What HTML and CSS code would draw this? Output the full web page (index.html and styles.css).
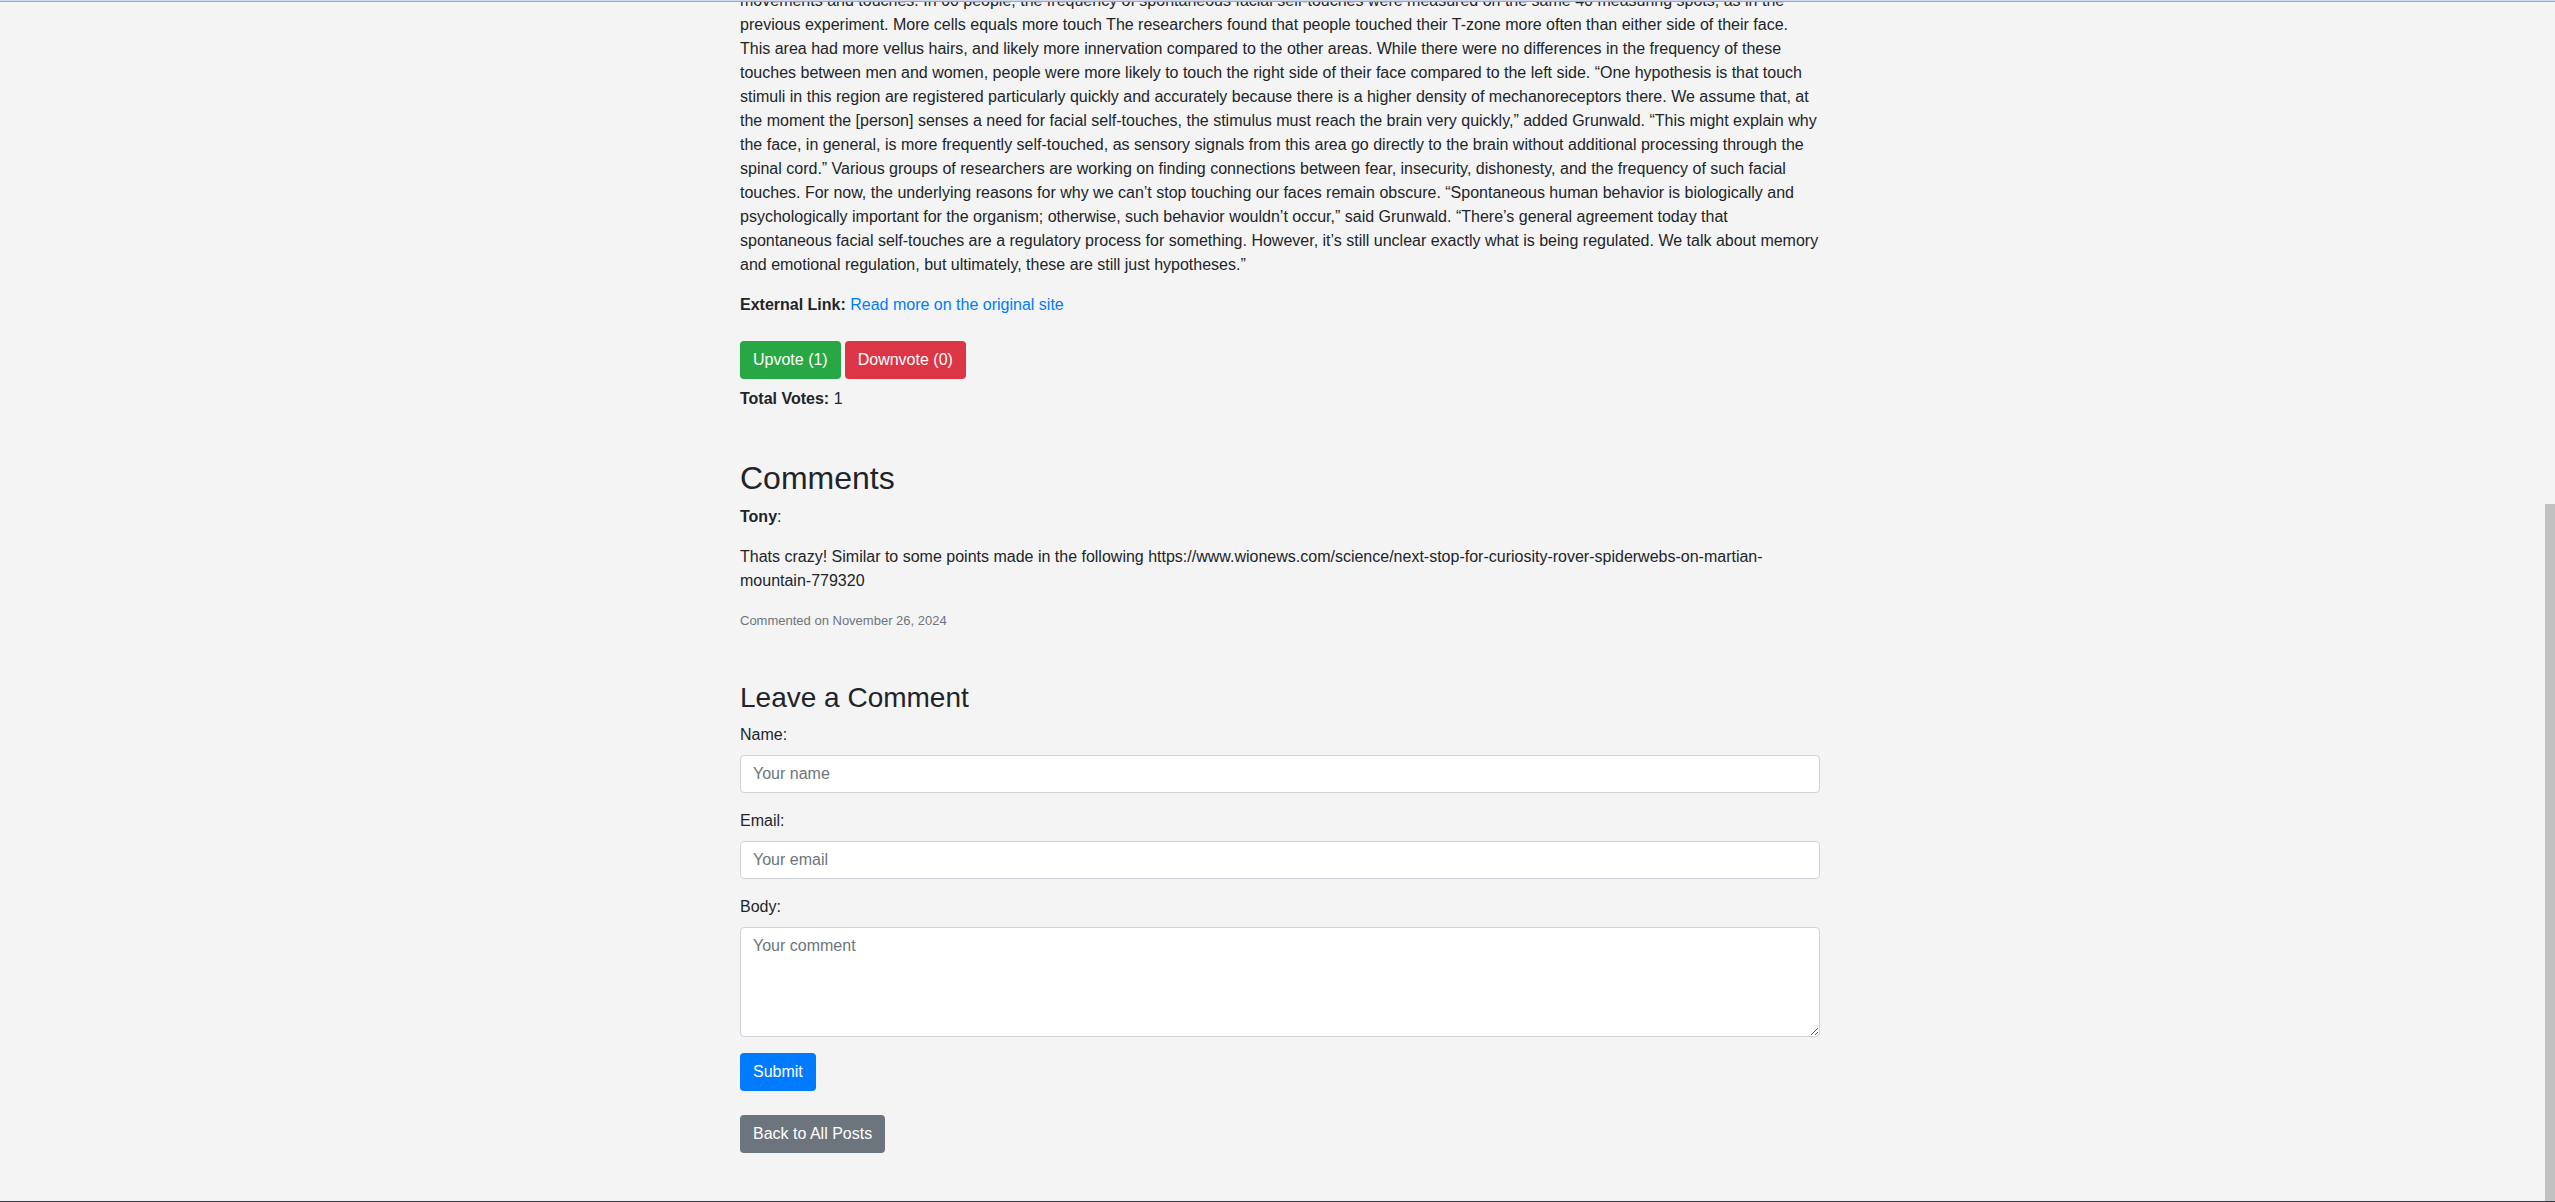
FILE: index.html
```html
<!DOCTYPE html>
<html lang="en">
<head>
<meta charset="utf-8">
<meta name="viewport" content="width=device-width, initial-scale=1">
<title>Post</title>
<link rel="stylesheet" href="styles.css">
</head>
<body>
<div class="window">
  <main class="page">
    <div class="container">
      <p>movements and touches. In 60 people, the frequency of spontaneous facial self-touches were measured on the same 40 measuring spots, as in the previous experiment. More cells equals more touch The researchers found that people touched their T-zone more often than either side of their face. This area had more vellus hairs, and likely more innervation compared to the other areas. While there were no differences in the frequency of these touches between men and women, people were more likely to touch the right side of their face compared to the left side. “One hypothesis is that touch stimuli in this region are registered particularly quickly and accurately because there is a higher density of mechanoreceptors there. We assume that, at the moment the [person] senses a need for facial self-touches, the stimulus must reach the brain very quickly,” added Grunwald. “This might explain why the face, in general, is more frequently self-touched, as sensory signals from this area go directly to the brain without additional processing through the spinal cord.” Various groups of researchers are working on finding connections between fear, insecurity, dishonesty, and the frequency of such facial touches. For now, the underlying reasons for why we can’t stop touching our faces remain obscure. “Spontaneous human behavior is biologically and psychologically important for the organism; otherwise, such behavior wouldn’t occur,” said Grunwald. “There’s general agreement today that spontaneous facial self-touches are a regulatory process for something. However, it’s still unclear exactly what is being regulated. We talk about memory and emotional regulation, but ultimately, these are still just hypotheses.”</p>
      <p class="external"><strong>External Link:</strong> <a href="#original">Read more on the original site</a></p>

      <section class="votes">
        <div class="vote-buttons">
          <button type="button" class="btn btn-success">Upvote (1)</button>
          <button type="button" class="btn btn-danger">Downvote (0)</button>
        </div>
        <p class="total"><strong>Total Votes:</strong> 1</p>
      </section>

      <section class="comments">
        <h2>Comments</h2>
        <article>
          <p><strong>Tony</strong>:</p>
          <p>Thats crazy! Similar to some points made in the following https://www.wionews.com/science/next-stop-for-curiosity-rover-spiderwebs-on-martian-mountain-779320</p>
          <p class="date">Commented on November 26, 2024</p>
        </article>
      </section>

      <section>
        <h3>Leave a Comment</h3>
        <form>
          <div class="form-group">
            <label for="name">Name:</label>
            <input class="form-control" type="text" id="name" name="name" placeholder="Your name">
          </div>
          <div class="form-group">
            <label for="email">Email:</label>
            <input class="form-control" type="email" id="email" name="email" placeholder="Your email">
          </div>
          <div class="form-group">
            <label for="body">Body:</label>
            <textarea class="form-control" id="body" name="body" rows="4" placeholder="Your comment"></textarea>
          </div>
          <button type="submit" class="btn btn-primary">Submit</button>
        </form>
      </section>

      <a class="btn btn-secondary back" href="#posts">Back to All Posts</a>
    </div>
  </main>
  <div class="scrollbar" aria-hidden="true"><div class="thumb"></div></div>
</div>
</body>
</html>
```
FILE: styles.css
```css
*,
*::before,
*::after {
  box-sizing: border-box;
}

body {
  margin: 0;
  background: #f4f4f4;
  color: #212529;
  font-family: Arial, "Liberation Sans", sans-serif;
  font-size: 16px;
  line-height: 24px;
}

/* The window shows the end of a long, scrolled post */
.window {
  display: grid;
  grid-template-columns: minmax(0, 1fr) 10px;
  height: 100vh;
  border-bottom: 1px solid #39393f;
  overflow: hidden;
}

.window::before {
  content: "";
  position: absolute;
  inset: 0 0 auto;
  height: 2px;
  background: #d0d9f0;
  border-bottom: 1px solid #98a9cd;
}

.page {
  display: flex;
  flex-direction: column;
  justify-content: flex-end;
  min-height: 0;
  padding: 0 0 48px 15px;
}

.container {
  width: 100%;
  max-width: 1080px;
  margin: 0 auto;
}

p {
  margin: 0 0 16px;
}

a {
  color: #007bff;
  text-decoration: none;
}

h2,
h3 {
  margin: 0 0 8px;
  font-weight: 500;
}

h2 {
  font-size: 32px;
  line-height: 38px;
}

h3 {
  font-size: 28px;
  line-height: 34px;
}

.external {
  margin-bottom: 24px;
}

.vote-buttons {
  display: flex;
  gap: 4px;
}

.votes,
.comments {
  margin-bottom: 48px;
}

.total {
  margin: 8px 0 0;
}

.date {
  margin: 0;
  color: #6c757d;
  font-size: 13px;
}

.btn {
  display: inline-block;
  padding: 6px 12px;
  border: 1px solid transparent;
  border-radius: 4px;
  color: #fff;
  font: inherit;
  text-align: center;
  vertical-align: middle;
  cursor: pointer;
}

.btn-success {
  background: #28a745;
}

.btn-danger {
  background: #dc3545;
}

.btn-primary {
  display: block;
  background: #007bff;
}

.btn-secondary {
  background: #6c757d;
}

.back {
  display: block;
  width: fit-content;
  margin-top: 24px;
}

.form-group {
  margin-bottom: 16px;
}

label {
  display: block;
  margin-bottom: 8px;
}

.form-control {
  display: block;
  width: 100%;
  height: 38px;
  padding: 6px 12px;
  border: 1px solid #ced4da;
  border-radius: 4px;
  background: #fff;
  color: #495057;
  font: inherit;
}

textarea.form-control {
  height: auto;
  resize: vertical;
}

.form-control::placeholder {
  color: #6c757d;
  opacity: 1;
}

.scrollbar {
  display: flex;
  flex-direction: column;
  justify-content: flex-end;
}

.thumb {
  height: 58%;
  background: #c1c1c1;
}
```
